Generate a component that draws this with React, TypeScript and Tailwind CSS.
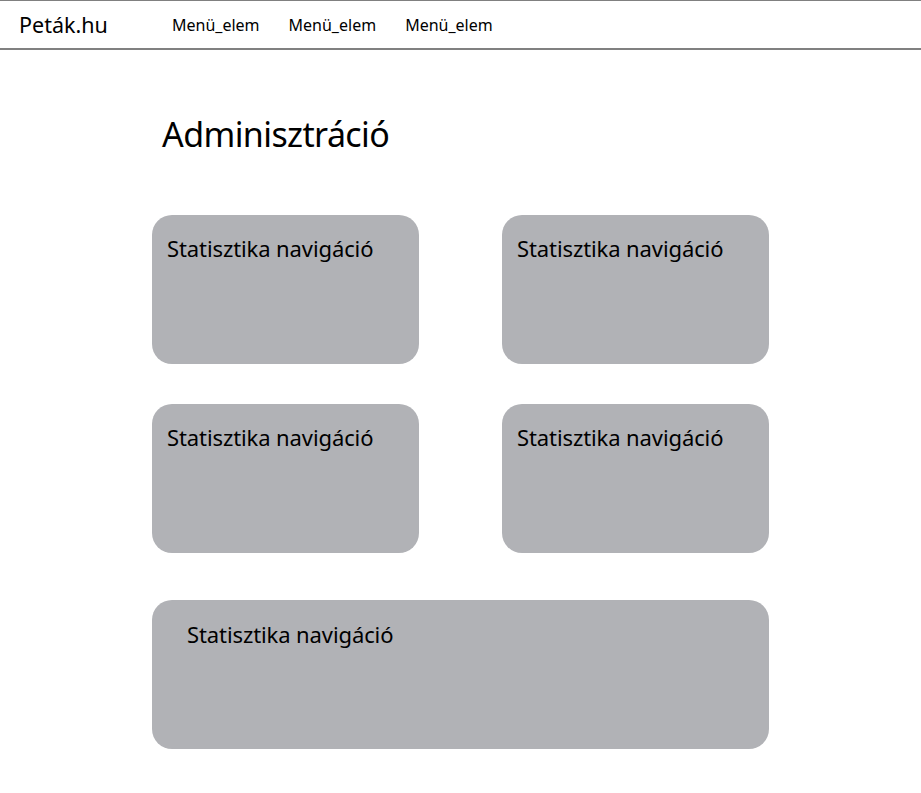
export default function App() {
  const font = { fontFamily: '"Noto Sans", "Lato", sans-serif' };
  return (
    <div className="min-h-screen bg-white text-black" style={font}>
      <header className="h-[50px] border-t border-b-2 border-t-[#808080] border-b-[#808080] flex items-center">
        <div className="pl-[19px] w-[172px] text-[21.5px] leading-none">Peták.hu</div>
        <nav className="flex gap-[29px] text-[16px] leading-none">
          <a href="#">Menü_elem</a>
          <a href="#">Menü_elem</a>
          <a href="#">Menü_elem</a>
        </nav>
      </header>

      <main className="w-[617px] mx-auto">
        <h1 className="mt-[64px] pl-[10px] text-[34px] leading-[40px] tracking-[-0.6px]">Adminisztráció</h1>

        <div className="mt-[61px] grid grid-cols-2 gap-x-[83px] gap-y-[40px]">
          {[0, 1, 2, 3].map((i) => (
            <div key={i} className="h-[149px] rounded-[20px] bg-[#b1b2b6] px-[15px] pt-[20px]">
              <div className="text-[22px] leading-[26px] tracking-[-0.1px]">Statisztika navigáció</div>
            </div>
          ))}
        </div>

        <div className="mt-[47px] h-[149px] rounded-[20px] bg-[#b1b2b6] px-[35px] pt-[21px]">
          <div className="text-[22px] leading-[26px] tracking-[-0.1px]">Statisztika navigáció</div>
        </div>
      </main>
    </div>
  );
}
